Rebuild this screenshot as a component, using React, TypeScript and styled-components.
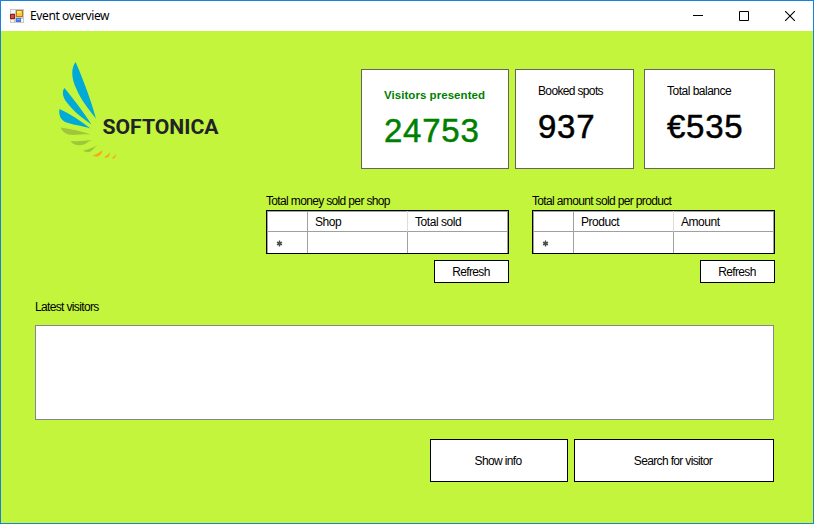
import React from "react";
import styled, { createGlobalStyle } from "styled-components";

const Global = createGlobalStyle`
  * { box-sizing: border-box; }
  body { margin: 0; font-family: "Liberation Sans", Arial, sans-serif; font-size: 12px; color: #000; }
`;

const Window = styled.div`
  width: 814px;
  height: 524px;
  border: 1px solid #1883d7;
  background: #c3f53c;
  overflow: hidden;
`;

const TitleBar = styled.header`
  height: 30px;
  background: #fff;
  display: flex;
  align-items: center;
  padding-left: 9px;
`;

const Title = styled.h1`
  flex: 1;
  margin: 0 0 0 6px;
  font: 400 12px/16px "Noto Sans", sans-serif;
  letter-spacing: -0.38px;
`;

const WindowButton = styled.button`
  width: 46px;
  height: 30px;
  padding: 0;
  border: 0;
  background: transparent;
  display: flex;
  align-items: center;
  justify-content: center;
`;

const Text = styled.span<{ $spacing?: number }>`
  display: block;
  white-space: nowrap;
  line-height: 14px;
  letter-spacing: ${(p) => p.$spacing ?? -0.65}px;
`;

const Content = styled.main`
  padding: 0 38px 0 34px;
`;

const Overview = styled.section`
  display: flex;
  height: 138px;
  padding-top: 30px;
`;

const Logo = styled.svg`
  width: 170px;
  height: 105px;
  margin-left: 20px;
  margin-right: 136px;
  flex: none;
`;

const Card = styled.div<{ $width: number; $gap: number; $top: number; $green?: boolean }>`
  flex: none;
  width: ${(p) => p.$width}px;
  height: 100px;
  margin: 8px ${(p) => p.$gap}px 0 0;
  padding: ${(p) => p.$top}px 0 0 22px;
  border: 1px solid #646464;
  background: #fff;
  color: ${(p) => (p.$green ? "#008000" : "#000")};
  font-weight: ${(p) => (p.$green ? 700 : 400)};
`;

const CardTitle = styled(Text)`
  font-size: 11.5px;
`;

const Figure = styled.div`
  font-size: 33px;
  font-weight: 400;
  line-height: 36px;
  margin-top: 11px;
  white-space: nowrap;
  letter-spacing: 0.75px;
  -webkit-text-stroke: 0.5px currentColor;
`;

const Reports = styled.section`
  display: flex;
  justify-content: flex-end;
  gap: 23px;
  padding-top: 25px;
`;

const Report = styled.div`
  width: 243px;
  display: flex;
  flex-direction: column;
`;

const Grid = styled.div`
  margin-top: 2px;
  height: 44px;
  border: 1px solid #000;
  background: #fff;
  display: grid;
  grid-template-columns: 41px 100px 100px;
  grid-template-rows: 21px 21px;
  box-shadow: inset 1px 1px #a0a0a0, inset -1px 0 #a0a0a0;
`;

const Cell = styled.div<{ $header?: boolean; $last?: boolean; $first?: boolean }>`
  padding: 4px 0 0 ${(p) => (p.$first ? 9 : 7)}px;
  border-right: ${(p) => (p.$last ? "0" : `1px solid ${p.$header && !p.$first ? "#dcdcdc" : "#a0a0a0"}`)};
  border-bottom: ${(p) => (p.$header ? "1px solid #a0a0a0" : "0")};
`;

const Button = styled.button<{ $width: number; $height: number }>`
  width: ${(p) => p.$width}px;
  height: ${(p) => p.$height}px;
  padding: 0 2px 0 0;
  border: 1px solid #000;
  background: #fff;
  color: #000;
  font: inherit;
`;

const Refresh = styled(Button)`
  align-self: flex-end;
  margin-top: 6px;
  padding-right: 1px;
`;

const Visitors = styled.section`
  padding-top: 17px;
`;

const VisitorList = styled.div`
  width: 739px;
  height: 95px;
  margin-top: 11px;
  border: 1px solid #828790;
  background: #fff;
`;

const Actions = styled.footer`
  display: flex;
  justify-content: flex-end;
  gap: 6px;
  padding: 19px 1px 0 0;
`;

const AppIcon = () => (
  <svg width="14" height="14" viewBox="0 0 14 14" shapeRendering="crispEdges">
    <path d="M0 0H14V14H0Z" fill="#c8c8c8" />
    <path d="M1 1H5V4H1ZM1 11H4V13H1ZM11 10H13V13H11Z" fill="#f4f4f4" />
    <rect y="5" width="5" height="5" fill="#941d18" />
    <rect x="1" y="6" width="3" height="3" fill="#d94a3e" />
    <rect x="6" y="1" width="7" height="7" fill="#b97c13" />
    <rect x="7" y="2" width="5" height="5" fill="#ffc832" />
    <rect x="7" y="2" width="4" height="2" fill="#ffe48b" />
    <rect x="6" y="9" width="5" height="4" fill="#3e78da" />
    <rect x="7" y="10" width="3" height="1" fill="#83b2f8" />
  </svg>
);

const SoftonicaLogo = () => (
  <Logo viewBox="55 61 170 105">
    <g fill="#00a9d6">
      <path d="M75.5 62C71 68 71.200 78 76 88C81 100 89 110 96 118.500C92 103 82 76 75.500 62Z" />
      <path d="M64.500 88C61.500 91 63 98 66.500 102C74 112 82 117.500 91.500 124.500C84 113 75 101 64.500 88Z" />
      <path d="M59.500 109C58.500 114 60 120 66.500 122.500C73 125 82 125.500 90.500 128.500C81 121 70 114 59.500 109Z" />
    </g>
    <g fill="#a0c63c">
      <path d="M60.500 127.500C62 132 67 135 73 135C80 135 85 134 91.500 134.500C81 131 71 129 60.500 127.500Z" />
      <path d="M70.500 141C73 145 78 146 82 145C87 144 88 141 92.500 140C85 141 78 141.500 70.500 141Z" />
      <path d="M83 150.500C87 153.500 91 152 93 149.500C94.500 147.500 96 146.500 98 145C92 148 88 149.500 83 150.500Z" />
    </g>
    <g fill="#f9a61a">
      <path d="M92.500 155.500C96 157.500 99.500 156.500 101 154C102.500 152 102 151 102.500 150C99 153 96 154.500 92.500 155.500Z" />
      <path d="M104 157C108 159 110 156 110 152C108.500 154.500 106.500 156 104 157Z" />
      <path d="M111.500 158C115 159.500 116 156.500 116 153.500C115 155.500 113.500 157 111.500 158Z" />
    </g>
    <text x="102.500" y="134" textLength="116" lengthAdjust="spacingAndGlyphs" fontFamily="Roboto, sans-serif" fontSize="21" fontWeight="700" fill="#222229">SOFTONICA</text>
  </Logo>
);

interface SalesReportProps {
  caption: string;
  columns: [string, string];
}

const SalesReport = ({ caption, columns }: SalesReportProps) => (
  <Report>
    <Text>{caption}</Text>
    <Grid>
      <Cell $header $first />
      <Cell $header><Text $spacing={-0.45}>{columns[0]}</Text></Cell>
      <Cell $header $last><Text $spacing={-0.45}>{columns[1]}</Text></Cell>
      <Cell $first>
        <svg width="7" height="7" viewBox="0 0 7 7">
          <path d="M3.500 .5V6.500M1 2L6 5M1 5L6 2" stroke="#404040" strokeWidth="1.300" />
          <circle cx="3.500" cy="3.500" r="2" fill="#505050" />
        </svg>
      </Cell>
      <Cell />
      <Cell $last />
    </Grid>
    <Refresh $width={75} $height={23}><Text>Refresh</Text></Refresh>
  </Report>
);

export default function App() {
  return (
    <>
      <Global />
      <Window>
        <TitleBar>
          <AppIcon />
          <Title>Event overview</Title>
          <WindowButton aria-label="Minimize">
            <svg width="10" height="10"><path d="M0 4.500H10" stroke="#000" /></svg>
          </WindowButton>
          <WindowButton aria-label="Maximize">
            <svg width="10" height="10"><path d="M.5 .5H9.500V9.500H.5Z" fill="none" stroke="#000" /></svg>
          </WindowButton>
          <WindowButton aria-label="Close">
            <svg width="10" height="10"><path d="M0 0L10 10M10 0L0 10" stroke="#000" strokeWidth="1.100" /></svg>
          </WindowButton>
        </TitleBar>
        <Content>
          <Overview>
            <SoftonicaLogo />
            <Card $width={148} $gap={6} $top={18} $green>
              <CardTitle $spacing={0.05}>Visitors presented</CardTitle>
              <Figure>24753</Figure>
            </Card>
            <Card $width={119} $gap={10} $top={14}>
              <Text>Booked spots</Text>
              <Figure>937</Figure>
            </Card>
            <Card $width={131} $gap={0} $top={14}>
              <Text $spacing={-0.5}>Total balance</Text>
              <Figure>€535</Figure>
            </Card>
          </Overview>
          <Reports>
            <SalesReport caption="Total money sold per shop" columns={["Shop", "Total sold"]} />
            <SalesReport caption="Total amount sold per product" columns={["Product", "Amount"]} />
          </Reports>
          <Visitors>
            <Text>Latest visitors</Text>
            <VisitorList />
          </Visitors>
          <Actions>
            <Button $width={138} $height={43}><Text>Show info</Text></Button>
            <Button $width={200} $height={43}><Text>Search for visitor</Text></Button>
          </Actions>
        </Content>
      </Window>
    </>
  );
}
